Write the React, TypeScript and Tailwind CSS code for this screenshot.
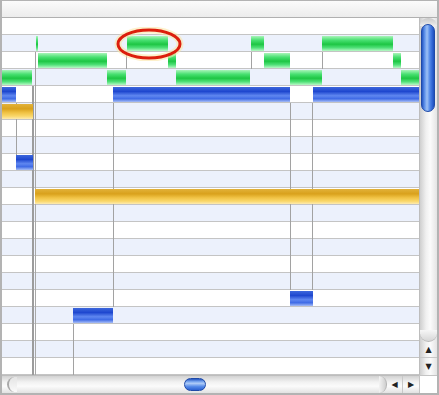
type Kind = "green" | "blue" | "orange";

type Bar = { row: number; x1: number; x2: number; kind: Kind };
type Link = { x: number; y1: number; y2: number };

const ROW_H = 17;
const ROWS = 21;
// canvas sits at x=2, y=18 in the window
const OX = 2;
const OY = 18;

const bars: Bar[] = [
  { row: 1, x1: 36, x2: 38, kind: "green" },
  { row: 1, x1: 127, x2: 168, kind: "green" },
  { row: 1, x1: 251, x2: 264, kind: "green" },
  { row: 1, x1: 322, x2: 393, kind: "green" },
  { row: 2, x1: 38, x2: 107, kind: "green" },
  { row: 2, x1: 168, x2: 176, kind: "green" },
  { row: 2, x1: 264, x2: 290, kind: "green" },
  { row: 2, x1: 393, x2: 401, kind: "green" },
  { row: 3, x1: 2, x2: 32, kind: "green" },
  { row: 3, x1: 107, x2: 126, kind: "green" },
  { row: 3, x1: 176, x2: 250, kind: "green" },
  { row: 3, x1: 290, x2: 322, kind: "green" },
  { row: 3, x1: 401, x2: 419, kind: "green" },
  { row: 4, x1: 2, x2: 16, kind: "blue" },
  { row: 4, x1: 113, x2: 290, kind: "blue" },
  { row: 4, x1: 313, x2: 419, kind: "blue" },
  { row: 5, x1: 2, x2: 33, kind: "orange" },
  { row: 8, x1: 16, x2: 33, kind: "blue" },
  { row: 10, x1: 35, x2: 419, kind: "orange" },
  { row: 16, x1: 290, x2: 313, kind: "blue" },
  { row: 17, x1: 73, x2: 113, kind: "blue" },
];

const links: Link[] = [
  { x: 35, y1: 52, y2: 86 },
  { x: 126, y1: 52, y2: 69 },
  { x: 251, y1: 52, y2: 69 },
  { x: 322, y1: 52, y2: 69 },
  { x: 16, y1: 103, y2: 155 },
  { x: 113, y1: 103, y2: 307 },
  { x: 290, y1: 103, y2: 290 },
  { x: 312, y1: 103, y2: 290 },
  { x: 73, y1: 324, y2: 375 },
];

const barStyle: Record<Kind, string> = {
  green:
    "bg-[linear-gradient(to_bottom,#a9f4b9_0%,#48e071_28%,#1ec644_55%,#4fe077_78%,#b9f8c7_100%)]",
  blue:
    "bg-[linear-gradient(to_bottom,#3d67dc_0%,#1e47cf_30%,#5f87f0_58%,#3f6be6_78%,#a7bdf6_100%)]",
  orange:
    "bg-[linear-gradient(to_bottom,#e2b23a_0%,#d9a11c_32%,#f0c244_58%,#fad86c_82%,#fdeab0_100%)]",
};

function Chart() {
  return (
    <div className="relative w-[417px] h-[357px] overflow-hidden">
      {/* striped rows */}
      {Array.from({ length: ROWS }).map((_, i) => (
        <div
          key={i}
          className={`h-[17px] border-b border-[#c4c4c4] ${i % 2 === 1 ? "bg-[#ecf1fc]" : "bg-white"}`}
        />
      ))}

      {/* dependency lines */}
      {links.map((l, i) => (
        <div
          key={"l" + i}
          className="absolute w-px bg-[#a2a2a2]"
          style={{ left: l.x - OX, top: l.y1 - OY, height: l.y2 - l.y1 }}
        />
      ))}
      {/* double divider on the left */}
      <div className="absolute left-[30px] top-[68px] bottom-0 flex gap-px">
        <div className="w-[2px] h-full bg-[#9c9c9c]" />
        <div className="w-px h-full bg-[#a8a8a8]" />
      </div>

      {/* bars */}
      {bars.map((b, i) => (
        <div
          key={"b" + i}
          className={`absolute h-[15px] ${barStyle[b.kind]}`}
          style={{ left: b.x1 - OX, top: b.row * ROW_H + 1, width: b.x2 - b.x1 }}
        />
      ))}

      {/* red marker around the selected bar */}
      <svg className="absolute left-[112px] top-[9px]" width="70" height="34" viewBox="0 0 70 34">
        <ellipse cx="35" cy="17" rx="31" ry="14" fill="none" stroke="#fbe3a0" strokeWidth="7" opacity="0.55" />
        <ellipse cx="35" cy="17" rx="31" ry="14" fill="none" stroke="#dc1e0c" strokeWidth="3" />
      </svg>
    </div>
  );
}

function VScroll() {
  return (
    <div className="w-[18px] h-[357px] border-l border-[#bdbdbd] flex flex-col bg-[linear-gradient(to_right,#cfcfcf,#f0f0f0_35%,#fbfbfb_60%,#e4e4e4)]">
      <div className="flex-1 relative">
        <div className="absolute left-0 right-0 top-0 h-[8px] rounded-t-full bg-[linear-gradient(to_bottom,#c9c9c9,#eeeeee)]" />
        <div className="absolute left-[1px] w-[14px] top-[6px] h-[88px] rounded-full border border-[#1f4aa8] bg-[linear-gradient(to_right,#2456c2,#5f92ea_22%,#9dc1f5_42%,#5288e8_65%,#2c61d0_88%,#2050bb)]" />
        <div className="absolute left-0 right-0 bottom-0 h-[12px] rounded-b-full bg-[linear-gradient(to_bottom,#f6f6f6,#d6d6d6)] border-b border-[#b8b8b8]" />
      </div>
      <div className="h-[16px] flex items-center justify-center border-b border-[#c8c8c8] text-[8px] leading-none text-[#222] font-['DejaVu_Sans',sans-serif]">
        ▲
      </div>
      <div className="h-[17px] flex items-center justify-center text-[8px] leading-none text-[#222] font-['DejaVu_Sans',sans-serif]">
        ▼
      </div>
    </div>
  );
}

function HScroll() {
  return (
    <div className="w-[417px] h-[18px] flex border-t border-[#bdbdbd] bg-[linear-gradient(to_bottom,#d2d2d2,#f1f1f1_35%,#fbfbfb_60%,#e2e2e2)]">
      <div className="flex-1 relative">
        <div className="absolute left-[5px] top-[1px] bottom-[1px] w-[10px] rounded-l-full border-l-2 border-[#a9a9a9] bg-[linear-gradient(to_bottom,#e4e4e4,#fafafa)]" />
        <div className="absolute left-[182px] top-[2px] w-[22px] h-[13px] rounded-full border border-[#1f4aa8] bg-[linear-gradient(to_bottom,#2456c2,#7eaaf0_25%,#aecbf7_40%,#5288e8_70%,#2c61d0)]" />
        <div className="absolute right-0 top-0 bottom-0 w-[8px] rounded-r-full bg-[linear-gradient(to_right,#f3f3f3,#cfcfcf)] border-r border-[#b5b5b5]" />
      </div>
      <div className="w-[16px] flex items-center justify-center border-r border-[#c8c8c8] text-[8px] leading-none text-[#222] font-['DejaVu_Sans',sans-serif]">
        ◀
      </div>
      <div className="w-[16px] flex items-center justify-center text-[8px] leading-none text-[#222] font-['DejaVu_Sans',sans-serif]">
        ▶
      </div>
    </div>
  );
}

export default function App() {
  return (
    <div className="w-[439px] h-[395px] bg-[#b3b3b3] pt-px pl-[2px] pr-[2px] pb-[2px] flex flex-col">
      {/* header strip */}
      <div className="h-[17px] border-b border-[#b0b0b0] bg-[linear-gradient(to_bottom,#fbfbfb,#ececec)]" />

      <div className="flex">
        <Chart />
        <VScroll />
      </div>

      <div className="flex">
        <HScroll />
        <div className="w-[18px] h-[18px] bg-white border-t border-l border-[#c4c4c4]" />
      </div>
    </div>
  );
}
